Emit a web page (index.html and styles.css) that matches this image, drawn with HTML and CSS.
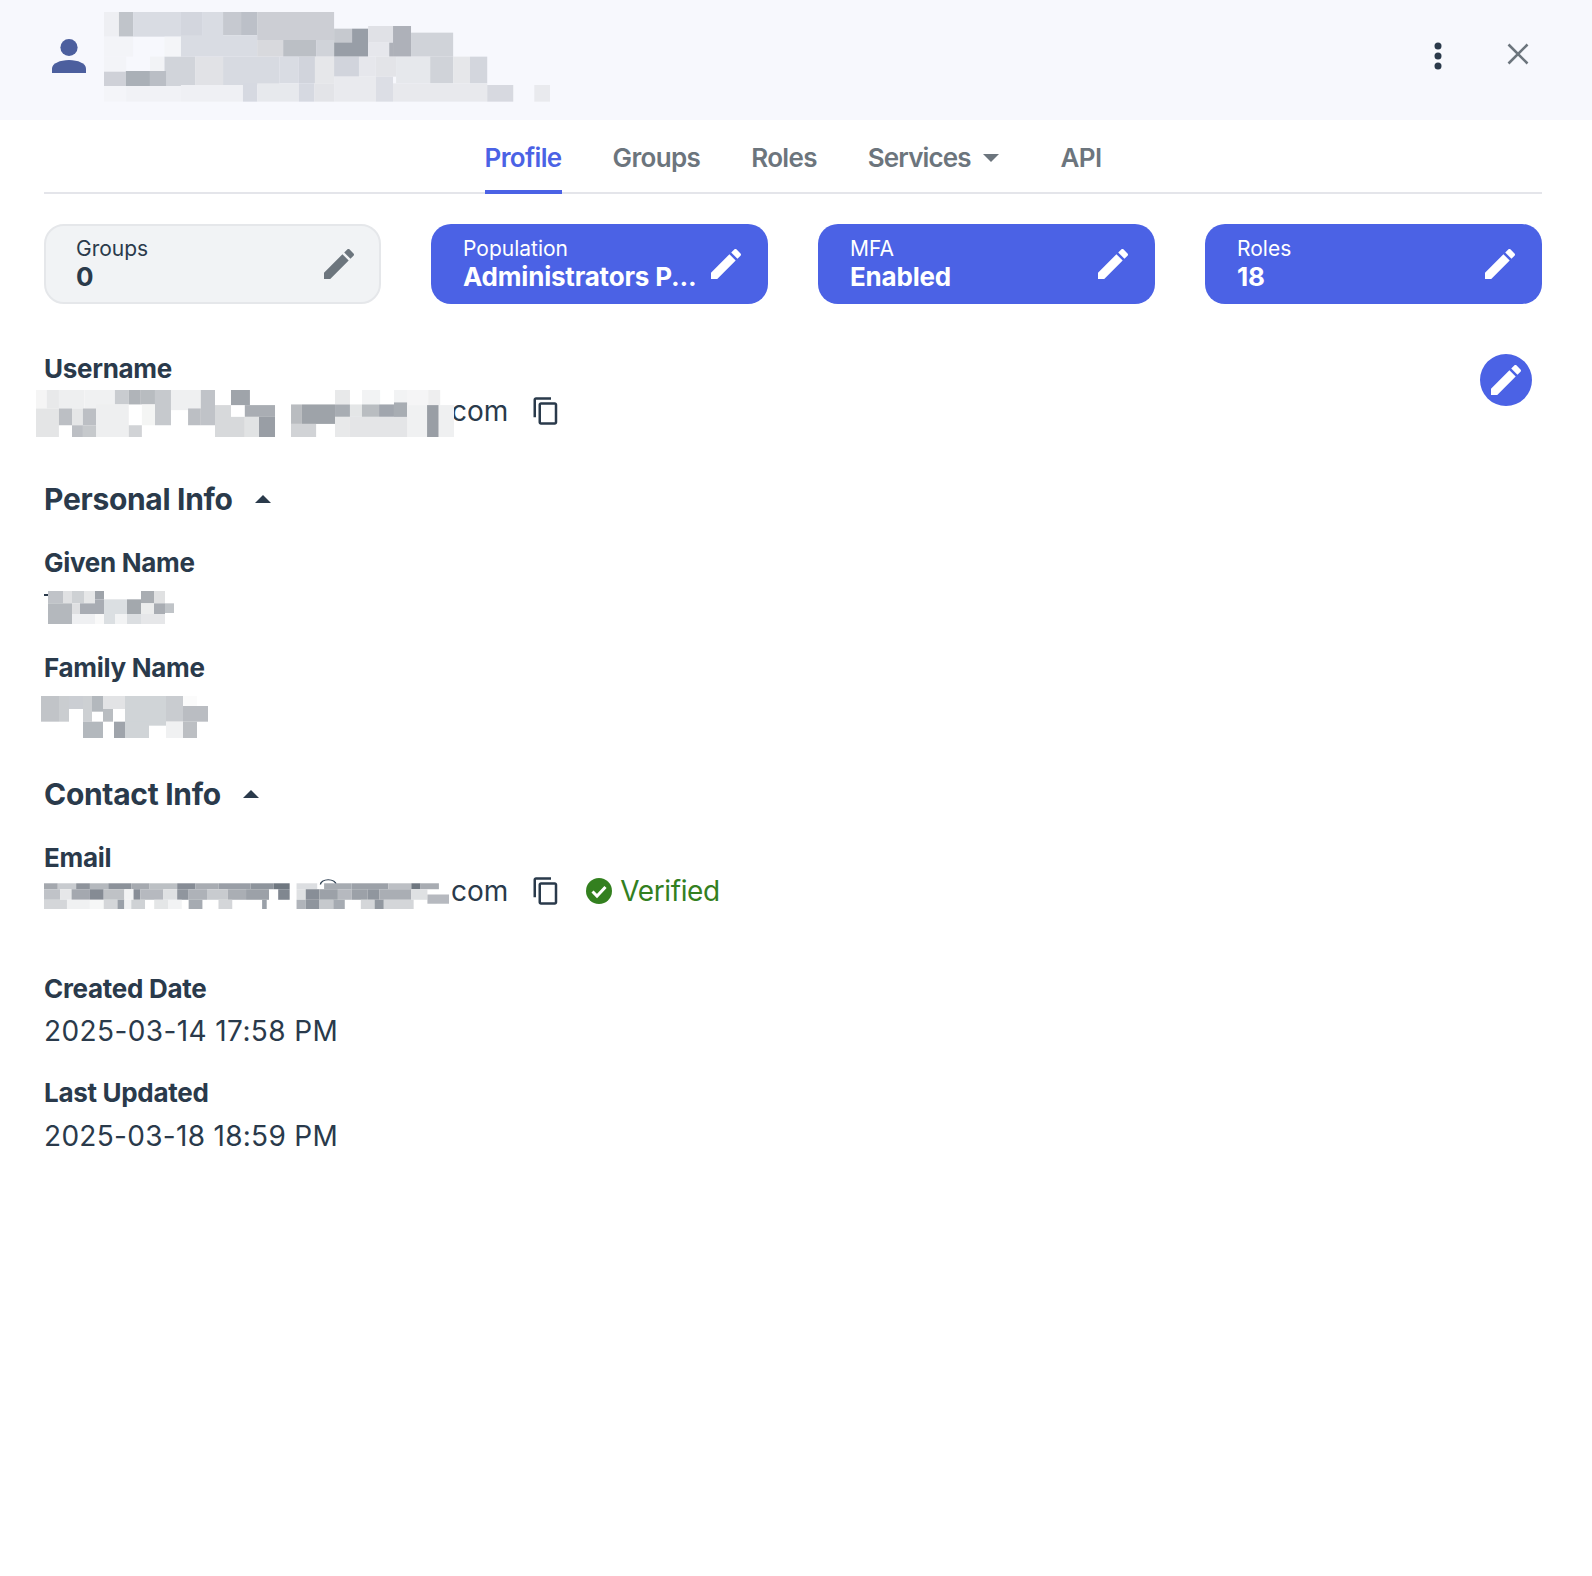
FILE: index.html
```html
<!DOCTYPE html>
<html>
<head>
<title>User Profile</title>
<link rel="stylesheet" href="styles.css">
</head>
<body>

<div class="top_bar">
   <svg class="user_icon" width="34" height="34" viewBox="0 0 34 34">
      <ellipse cx="17" cy="8.5" rx="8.600" ry="8.500" fill="#4c5f9e"/>
      <path d="M0 34V29.500C0 24.500 8 21 17 21s17 3.500 17 8.500V34z" fill="#4c5f9e"/>
   </svg>
   <svg class="blur_name" viewBox="272 36 1165 270" preserveAspectRatio="none">
      <rect x="272" y="36" width="39" height="74" fill="#eeeff3"/>
      <rect x="311" y="36" width="37" height="74" fill="#c0c4ca"/>
      <rect x="348" y="36" width="125" height="74" fill="#d9dce3"/>
      <rect x="473" y="36" width="57" height="74" fill="#d3d6de"/>
      <rect x="530" y="36" width="53" height="74" fill="#d9dce3"/>
      <rect x="583" y="36" width="47" height="70" fill="#c6c9d0"/>
      <rect x="630" y="36" width="42" height="70" fill="#bcc0c8"/>
      <rect x="672" y="36" width="201" height="84" fill="#ccced4"/>
      <rect x="873" y="86" width="47" height="44" fill="#c6c9cf"/>
      <rect x="920" y="86" width="42" height="44" fill="#989ea7"/>
      <rect x="873" y="128" width="89" height="42" fill="#989ea7"/>
      <rect x="962" y="78" width="65" height="50" fill="#e0e1e6"/>
      <rect x="962" y="128" width="55" height="42" fill="#e6e7ec"/>
      <rect x="1027" y="78" width="47" height="92" fill="#aeb1b9"/>
      <rect x="1017" y="128" width="10" height="42" fill="#aeb1b9"/>
      <rect x="1074" y="98" width="110" height="72" fill="#d0d3d9"/>
      <rect x="272" y="110" width="76" height="60" fill="#f3f4f8"/>
      <rect x="430" y="110" width="43" height="60" fill="#f4f5f8"/>
      <rect x="473" y="106" width="199" height="64" fill="#d9dce3"/>
      <rect x="672" y="120" width="68" height="50" fill="#d8d9dd"/>
      <rect x="740" y="120" width="86" height="50" fill="#bbbfc5"/>
      <rect x="826" y="120" width="47" height="50" fill="#d0d3d9"/>
      <rect x="272" y="170" width="58" height="45" fill="#f3f4f8"/>
      <rect x="392" y="170" width="38" height="45" fill="#f2f3f6"/>
      <rect x="430" y="170" width="80" height="88" fill="#d1d4da"/>
      <rect x="510" y="170" width="73" height="85" fill="#e1e2e6"/>
      <rect x="583" y="170" width="147" height="85" fill="#d7dae1"/>
      <rect x="730" y="170" width="50" height="80" fill="#d9dce3"/>
      <rect x="780" y="170" width="43" height="80" fill="#d1d4dc"/>
      <rect x="823" y="170" width="50" height="80" fill="#e6e7ea"/>
      <rect x="873" y="170" width="65" height="60" fill="#d1d4dc"/>
      <rect x="938" y="170" width="44" height="60" fill="#e6e7ec"/>
      <rect x="982" y="170" width="53" height="60" fill="#e3e4e8"/>
      <rect x="1035" y="170" width="89" height="80" fill="#e6e8ec"/>
      <rect x="1124" y="170" width="60" height="80" fill="#d0d3d9"/>
      <rect x="1184" y="170" width="44" height="80" fill="#e6e7ea"/>
      <rect x="1228" y="170" width="45" height="80" fill="#d3d6dd"/>
      <rect x="272" y="215" width="57" height="43" fill="#cfd1d8"/>
      <rect x="329" y="213" width="63" height="45" fill="#aab0b7"/>
      <rect x="392" y="213" width="42" height="45" fill="#babec5"/>
      <rect x="272" y="258" width="58" height="47" fill="#f4f5f9"/>
      <rect x="330" y="258" width="143" height="47" fill="#f1f2f6"/>
      <rect x="473" y="255" width="162" height="50" fill="#eff0f4"/>
      <rect x="635" y="250" width="37" height="55" fill="#d6d9e1"/>
      <rect x="672" y="250" width="109" height="55" fill="#e7e9ed"/>
      <rect x="781" y="250" width="40" height="55" fill="#d6d9e1"/>
      <rect x="821" y="250" width="52" height="55" fill="#e3e4e8"/>
      <rect x="873" y="230" width="109" height="75" fill="#e9eaee"/>
      <rect x="982" y="230" width="45" height="75" fill="#dcdee5"/>
      <rect x="1027" y="250" width="246" height="55" fill="#e8e9ed"/>
      <rect x="1273" y="255" width="68" height="50" fill="#d7d9e0"/>
      <rect x="1396" y="255" width="41" height="50" fill="#e9eaee"/>
   </svg>
   <div class="top_actions">
      <svg class="more_icon" width="8" height="28" viewBox="0 0 8 28">
         <circle cx="4" cy="4" r="3.500" fill="#2b3a4b"/>
         <circle cx="4" cy="14" r="3.500" fill="#2b3a4b"/>
         <circle cx="4" cy="24" r="3.500" fill="#2b3a4b"/>
      </svg>
      <svg class="close_icon" width="22" height="22" viewBox="0 0 22 22">
         <path d="M1.500 1.500l19 19M20.500 1.500l-19 19" stroke="#6c757d" stroke-width="2.600" fill="none"/>
      </svg>
   </div>
</div>

<div class="page">

   <div class="tabs">
      <a class="tab tab_on">Profile</a>
      <a class="tab">Groups</a>
      <a class="tab">Roles</a>
      <a class="tab tab_menu">Services<span class="caret_down"></span></a>
      <a class="tab">API</a>
   </div>

   <div class="cards">
      <div class="card card_off">
         <div class="card_text">
            <div class="card_label">Groups</div>
            <div class="card_value">0</div>
         </div>
         <svg class="card_edit" viewBox="0 0 24 24"><path d="M3 17.250V21h3.750L17.810 9.940l-3.750-3.750L3 17.250zM20.710 7.040c.39-.39.39-1.020 0-1.410l-2.340-2.340c-.39-.39-1.020-.39-1.410 0l-1.830 1.830 3.750 3.750 1.830-1.830z"/></svg>
      </div>
      <div class="card">
         <div class="card_text">
            <div class="card_label">Population</div>
            <div class="card_value">Administrators P...</div>
         </div>
         <svg class="card_edit" viewBox="0 0 24 24"><path d="M3 17.250V21h3.750L17.810 9.940l-3.750-3.750L3 17.250zM20.710 7.040c.39-.39.39-1.020 0-1.410l-2.340-2.340c-.39-.39-1.020-.39-1.410 0l-1.830 1.830 3.750 3.750 1.830-1.830z"/></svg>
      </div>
      <div class="card">
         <div class="card_text">
            <div class="card_label">MFA</div>
            <div class="card_value">Enabled</div>
         </div>
         <svg class="card_edit" viewBox="0 0 24 24"><path d="M3 17.250V21h3.750L17.810 9.940l-3.750-3.750L3 17.250zM20.710 7.040c.39-.39.39-1.020 0-1.410l-2.340-2.340c-.39-.39-1.020-.39-1.410 0l-1.830 1.830 3.750 3.750 1.830-1.830z"/></svg>
      </div>
      <div class="card">
         <div class="card_text">
            <div class="card_label">Roles</div>
            <div class="card_value">18</div>
         </div>
         <svg class="card_edit" viewBox="0 0 24 24"><path d="M3 17.250V21h3.750L17.810 9.940l-3.750-3.750L3 17.250zM20.710 7.040c.39-.39.39-1.020 0-1.410l-2.340-2.340c-.39-.39-1.020-.39-1.410 0l-1.830 1.830 3.750 3.750 1.830-1.830z"/></svg>
      </div>
   </div>

   <div class="user_row">
      <div>
         <div class="field_label">Username</div>
         <div class="copy_row username_row">
            <svg class="blur_username" viewBox="17 135 1149 140" preserveAspectRatio="none">
               <rect x="17" y="135" width="30" height="55" fill="#f5f5f5"/>
               <rect x="47" y="135" width="33" height="55" fill="#e8e9ea"/>
               <rect x="80" y="135" width="70" height="55" fill="#eeeff0"/>
               <rect x="150" y="135" width="84" height="55" fill="#f0f1f2"/>
               <rect x="234" y="135" width="38" height="43" fill="#c9ccd0"/>
               <rect x="272" y="135" width="33" height="43" fill="#b0b4b9"/>
               <rect x="305" y="135" width="39" height="43" fill="#b8bcc0"/>
               <rect x="344" y="135" width="44" height="105" fill="#c6c9cd"/>
               <rect x="388" y="135" width="82" height="60" fill="#eff0f1"/>
               <rect x="470" y="135" width="39" height="105" fill="#c0c3c8"/>
               <rect x="553" y="135" width="52" height="45" fill="#9fa4aa"/>
               <rect x="839" y="135" width="41" height="43" fill="#e8e9ea"/>
               <rect x="913" y="135" width="50" height="43" fill="#f2f3f4"/>
               <rect x="1001" y="135" width="36" height="43" fill="#f2f3f4"/>
               <rect x="1037" y="135" width="58" height="45" fill="#f5f5f6"/>
               <rect x="1095" y="135" width="33" height="45" fill="#eeeeef"/>
               <rect x="17" y="190" width="63" height="85" fill="#e4e5e6"/>
               <rect x="80" y="190" width="36" height="50" fill="#bcbfc4"/>
               <rect x="116" y="190" width="30" height="50" fill="#e5e6e7"/>
               <rect x="146" y="190" width="36" height="50" fill="#bcbfc4"/>
               <rect x="182" y="178" width="90" height="97" fill="#eeeff0"/>
               <rect x="308" y="178" width="36" height="62" fill="#f4f5f4"/>
               <rect x="435" y="190" width="35" height="50" fill="#bcbfc4"/>
               <rect x="509" y="180" width="44" height="95" fill="#d7d9db"/>
               <rect x="591" y="180" width="83" height="35" fill="#a9adb3"/>
               <rect x="718" y="178" width="30" height="58" fill="#b9bcc0"/>
               <rect x="748" y="178" width="91" height="58" fill="#9ea3a9"/>
               <rect x="839" y="178" width="41" height="37" fill="#a8adb3"/>
               <rect x="880" y="178" width="33" height="37" fill="#e4e6e7"/>
               <rect x="913" y="178" width="47" height="37" fill="#b9bdc1"/>
               <rect x="960" y="178" width="41" height="37" fill="#a1a6ae"/>
               <rect x="1001" y="172" width="36" height="46" fill="#a8adb3"/>
               <rect x="1037" y="180" width="55" height="95" fill="#f0f1f2"/>
               <rect x="1092" y="180" width="32" height="95" fill="#999ea5"/>
               <rect x="1124" y="180" width="42" height="95" fill="#eff0f1"/>
               <rect x="116" y="240" width="30" height="35" fill="#bcbfc4"/>
               <rect x="146" y="240" width="36" height="35" fill="#c6c9cc"/>
               <rect x="272" y="240" width="36" height="35" fill="#d1d3d6"/>
               <rect x="553" y="215" width="38" height="60" fill="#d7d9db"/>
               <rect x="591" y="215" width="39" height="60" fill="#e1e3e4"/>
               <rect x="630" y="215" width="44" height="60" fill="#999ea5"/>
               <rect x="718" y="236" width="69" height="39" fill="#d1d3d6"/>
               <rect x="839" y="215" width="41" height="60" fill="#e8e9ea"/>
               <rect x="880" y="215" width="157" height="60" fill="#e4e5e7"/>
            </svg>
            <span class="field_value com_clipped">com</span>
            <svg class="copy_icon" viewBox="0 0 24 24"><path d="M16 1H4c-1.100 0-2 .9-2 2v14h2V3h12V1zm3 4H8c-1.100 0-2 .9-2 2v14c0 1.100.9 2 2 2h11c1.100 0 2-.9 2-2V7c0-1.100-.9-2-2-2zm0 16H8V7h11v14z"/></svg>
         </div>
      </div>
      <div class="round_edit">
         <svg viewBox="0 0 24 24"><path d="M3 17.250V21h3.750L17.810 9.940l-3.750-3.750L3 17.250zM20.710 7.040c.39-.39.39-1.020 0-1.410l-2.340-2.340c-.39-.39-1.020-.39-1.410 0l-1.830 1.830 3.750 3.750 1.830-1.830z"/></svg>
      </div>
   </div>

   <h2 class="section_head personal_head">Personal Info<span class="caret_up"></span></h2>

   <div class="field_label given_label">Given Name</div>
   <div class="given_row">
      <span class="dash"></span>
      <svg class="blur_given" viewBox="54 153 378 99" preserveAspectRatio="none">
         <rect x="54" y="153" width="45" height="37" fill="#c0c3c8"/>
         <rect x="99" y="153" width="27" height="37" fill="#e0e1e3"/>
         <rect x="126" y="153" width="36" height="37" fill="#ced1d4"/>
         <rect x="162" y="153" width="33" height="37" fill="#e6e7e8"/>
         <rect x="195" y="153" width="27" height="25" fill="#9fa4aa"/>
         <rect x="333" y="153" width="39" height="37" fill="#a9adb2"/>
         <rect x="372" y="153" width="33" height="37" fill="#e0e1e2"/>
         <rect x="54" y="190" width="72" height="62" fill="#b4b8bd"/>
         <rect x="126" y="190" width="24" height="32" fill="#dfe0e2"/>
         <rect x="150" y="190" width="45" height="32" fill="#a8acb3"/>
         <rect x="195" y="178" width="27" height="44" fill="#a8acb3"/>
         <rect x="222" y="178" width="69" height="74" fill="#dbdfe2"/>
         <rect x="291" y="178" width="42" height="44" fill="#a3a8ad"/>
         <rect x="333" y="190" width="39" height="32" fill="#eceded"/>
         <rect x="372" y="190" width="33" height="32" fill="#a9adb3"/>
         <rect x="405" y="190" width="27" height="29" fill="#c0c4c8"/>
         <rect x="126" y="222" width="69" height="30" fill="#eff0f2"/>
         <rect x="195" y="222" width="27" height="30" fill="#f9f9f9"/>
         <rect x="255" y="222" width="36" height="30" fill="#f2f3f4"/>
         <rect x="291" y="222" width="42" height="30" fill="#dbdee1"/>
         <rect x="333" y="222" width="72" height="30" fill="#e6e7e9"/>
      </svg>
   </div>

   <div class="field_label family_label">Family Name</div>
   <svg class="blur_family" viewBox="33 468 501 126" preserveAspectRatio="none">
      <rect x="33" y="468" width="54" height="77" fill="#c1c4c8"/>
      <rect x="87" y="468" width="30" height="77" fill="#cacdd0"/>
      <rect x="117" y="468" width="42" height="39" fill="#cbced3"/>
      <rect x="159" y="468" width="27" height="77" fill="#cdd0d3"/>
      <rect x="186" y="468" width="33" height="47" fill="#b3b8bd"/>
      <rect x="219" y="468" width="66" height="39" fill="#e2e3e5"/>
      <rect x="285" y="468" width="123" height="89" fill="#d0d4d7"/>
      <rect x="408" y="468" width="51" height="77" fill="#c9ccd0"/>
      <rect x="459" y="468" width="42" height="30" fill="#fbfbfb"/>
      <rect x="459" y="498" width="75" height="47" fill="#babdc2"/>
      <rect x="219" y="507" width="30" height="38" fill="#b9bdc1"/>
      <rect x="159" y="545" width="60" height="49" fill="#b3b8bd"/>
      <rect x="252" y="545" width="33" height="49" fill="#9fa4ab"/>
      <rect x="285" y="545" width="72" height="49" fill="#d0d4d7"/>
      <rect x="408" y="545" width="51" height="49" fill="#f0f1f2"/>
      <rect x="459" y="545" width="42" height="49" fill="#bcbfc3"/>
   </svg>

   <h2 class="section_head contact_head">Contact Info<span class="caret_up"></span></h2>

   <div class="field_label email_label">Email</div>
   <div class="copy_row email_row">
      <svg class="blur_email" viewBox="30 325 882 91" preserveAspectRatio="none">
         <path d="M632 342a17 15 0 0 1 34 0" stroke="#2c3e50" stroke-width="3" fill="none"/>
         <rect x="30" y="338" width="30" height="18" fill="#a4a8ae"/>
         <rect x="60" y="338" width="40" height="18" fill="#c8cbcf"/>
         <rect x="100" y="338" width="30" height="18" fill="#8e939b"/>
         <rect x="130" y="338" width="40" height="18" fill="#b4b8bd"/>
         <rect x="170" y="338" width="50" height="18" fill="#8c929a"/>
         <rect x="220" y="338" width="40" height="18" fill="#a6aab0"/>
         <rect x="260" y="338" width="60" height="18" fill="#bcc0c4"/>
         <rect x="320" y="338" width="40" height="18" fill="#868c95"/>
         <rect x="360" y="338" width="50" height="18" fill="#a8acb2"/>
         <rect x="410" y="338" width="70" height="18" fill="#999ea6"/>
         <rect x="480" y="338" width="50" height="18" fill="#8e949c"/>
         <rect x="530" y="338" width="35" height="18" fill="#6f7780"/>
         <rect x="580" y="338" width="45" height="18" fill="#dcdee1"/>
         <rect x="640" y="338" width="60" height="18" fill="#a6abb1"/>
         <rect x="700" y="338" width="80" height="18" fill="#9ca1a8"/>
         <rect x="780" y="338" width="50" height="18" fill="#bcbfc4"/>
         <rect x="830" y="338" width="20" height="18" fill="#6f7780"/>
         <rect x="850" y="338" width="40" height="18" fill="#a8acb2"/>
         <rect x="30" y="356" width="35" height="32" fill="#c0c3c8"/>
         <rect x="65" y="356" width="25" height="32" fill="#e6e7e9"/>
         <rect x="90" y="356" width="40" height="32" fill="#a4a8af"/>
         <rect x="130" y="356" width="30" height="32" fill="#858b94"/>
         <rect x="160" y="356" width="45" height="32" fill="#bfc2c6"/>
         <rect x="205" y="356" width="20" height="32" fill="#f2f3f4"/>
         <rect x="225" y="356" width="15" height="32" fill="#888e97"/>
         <rect x="240" y="356" width="50" height="32" fill="#b6b9bf"/>
         <rect x="290" y="356" width="30" height="32" fill="#dfe1e3"/>
         <rect x="320" y="356" width="25" height="32" fill="#90969e"/>
         <rect x="345" y="356" width="40" height="32" fill="#aeb2b8"/>
         <rect x="385" y="356" width="45" height="32" fill="#c8cbcf"/>
         <rect x="430" y="356" width="40" height="32" fill="#aaaeb4"/>
         <rect x="470" y="356" width="50" height="32" fill="#9ca1a8"/>
         <rect x="540" y="356" width="25" height="32" fill="#808790"/>
         <rect x="580" y="356" width="20" height="32" fill="#dfe1e3"/>
         <rect x="600" y="356" width="30" height="32" fill="#888e97"/>
         <rect x="630" y="356" width="40" height="32" fill="#9ca1a8"/>
         <rect x="670" y="356" width="30" height="32" fill="#b6b9bf"/>
         <rect x="700" y="356" width="35" height="32" fill="#9ca1a8"/>
         <rect x="735" y="356" width="25" height="32" fill="#90969e"/>
         <rect x="760" y="356" width="70" height="32" fill="#aaaeb4"/>
         <rect x="830" y="356" width="35" height="32" fill="#dfe1e3"/>
         <rect x="865" y="372" width="47" height="28" fill="#b6b9bf"/>
         <rect x="30" y="388" width="50" height="28" fill="#d4d6d9"/>
         <rect x="80" y="388" width="50" height="28" fill="#f0f1f2"/>
         <rect x="130" y="388" width="30" height="28" fill="#f6f7f7"/>
         <rect x="160" y="388" width="30" height="28" fill="#d4d6d9"/>
         <rect x="190" y="388" width="15" height="28" fill="#9aa0a8"/>
         <rect x="205" y="388" width="15" height="28" fill="#f0f1f2"/>
         <rect x="220" y="388" width="30" height="28" fill="#cfd2d5"/>
         <rect x="270" y="388" width="30" height="28" fill="#e4e6e7"/>
         <rect x="300" y="388" width="30" height="28" fill="#f2f3f4"/>
         <rect x="345" y="388" width="30" height="28" fill="#a6abb2"/>
         <rect x="410" y="388" width="30" height="28" fill="#d4d6d9"/>
         <rect x="505" y="388" width="10" height="28" fill="#9aa0a8"/>
         <rect x="580" y="388" width="20" height="28" fill="#b0b4ba"/>
         <rect x="600" y="388" width="30" height="28" fill="#8f959d"/>
         <rect x="630" y="388" width="30" height="28" fill="#c6c9cd"/>
         <rect x="660" y="388" width="25" height="28" fill="#a6abb2"/>
         <rect x="720" y="388" width="30" height="28" fill="#d4d6d9"/>
         <rect x="750" y="388" width="20" height="28" fill="#9298a0"/>
         <rect x="770" y="388" width="65" height="28" fill="#d4d6d9"/>
      </svg>
      <span class="field_value email_com">com</span>
      <svg class="copy_icon" viewBox="0 0 24 24"><path d="M16 1H4c-1.100 0-2 .9-2 2v14h2V3h12V1zm3 4H8c-1.100 0-2 .9-2 2v14c0 1.100.9 2 2 2h11c1.100 0 2-.9 2-2V7c0-1.100-.9-2-2-2zm0 16H8V7h11v14z"/></svg>
      <svg class="check_icon" viewBox="0 0 26 26">
         <circle cx="13" cy="13" r="13" fill="#33801f"/>
         <path d="M6.500 13.500l4.500 4.500L19.500 9" stroke="#fff" stroke-width="3" fill="none"/>
      </svg>
      <span class="verified">Verified</span>
   </div>

   <div class="field_label created_label">Created Date</div>
   <div class="field_value date_value">2025-03-14 17:58 PM</div>

   <div class="field_label updated_label">Last Updated</div>
   <div class="field_value date_value updated_value">2025-03-18 18:59 PM</div>

</div>

</body>
</html>
```

FILE: styles.css
```css
html {height: 100%}
body {margin: 0; background-color: white; color: #2a3a4b;
      font-family: Inter, "Liberation Sans", sans-serif}

/* header strip */
.top_bar {display: flex; align-items: flex-start; height: 120px; background-color: #f7f8fd}
.user_icon {margin: 39px 0 0 52px; flex: none}
.blur_name {width: 446px; height: 90px; margin: 12px 0 0 18px; flex: none}
.top_actions {margin-left: auto; display: flex; align-items: flex-start; gap: 65px;
              padding: 42px 63px 0 0}
.more_icon {display: block}
.close_icon {display: block; margin-top: 1px}

/* main column */
.page {padding: 0 50px 0 44px}

.tabs {display: flex; justify-content: center; gap: 51px; height: 72px;
       border-bottom: 2px solid #e4e5ea}
.tab  {font-size: 26px; font-weight: 600; letter-spacing: -0.65px; color: #6c757d;
       padding-top: 22px; height: 48px; display: block}
.tab_on {color: #4b62e5; border-bottom: 4px solid #4b62e5}
.tab_menu {display: flex; align-items: flex-start; margin-right: 11px; letter-spacing: -0.9px}
.caret_down {width: 0; height: 0; border-left: 8.500px solid transparent;
             border-right: 8.500px solid transparent; border-top: 8px solid #6c757d;
             margin: 12px 0 0 12px}

.cards {display: grid; grid-template-columns: repeat(4, 1fr); gap: 50px; margin-top: 30px}
.card  {display: flex; align-items: center; justify-content: space-between; height: 80px;
        box-sizing: border-box; padding: 0 24px 0 32px; border-radius: 20px;
        background-color: #4b62e5; color: white; min-width: 0}
.card_off {background-color: #f1f3f5; border: 2px solid #e5e7ea; color: #2a3a4b;
           padding-left: 30px; padding-right: 22px}
.card_off .card_edit {fill: #6c757d}
.card_label {font-size: 21px; line-height: 26px}
.card_value {font-size: 26px; line-height: 30px; font-weight: 700; letter-spacing: -0.2px;
             white-space: nowrap}
.card_edit {width: 40px; height: 40px; fill: white; flex: none; margin-right: -2px}

/* fields */
.user_row {display: flex; justify-content: space-between; align-items: flex-start; margin-top: 49px}
.field_label {font-size: 26px; line-height: 32px; font-weight: 700; letter-spacing: -0.3px}
.field_value {font-size: 28px; line-height: 36px}
.copy_row {display: flex; align-items: center}
.username_row {height: 47px; margin-left: -8px; margin-top: 5px}
.blur_username {width: 418px; height: 47px; flex: none; position: relative; z-index: 1}
.com_clipped {margin: -6px 0 0 -3px}
.email_row {height: 30px; margin-top: 2px}
.blur_email {width: 405px; height: 30px; flex: none; margin-top: 6px}
.email_com {margin-left: 2px}
.copy_icon {width: 30px; height: 30px; fill: #2a3a4b; flex: none; margin-left: 23px}
.com_clipped + .copy_icon {margin-top: -6px}
.check_icon {width: 26px; height: 26px; flex: none; margin-left: 25px}
.verified {font-size: 28px; color: #33801f; margin-left: 8px; letter-spacing: -0.4px}

.round_edit {width: 52px; height: 52px; border-radius: 50%; background-color: #4b62e5;
             display: flex; align-items: center; justify-content: center;
             margin: 1px 10px 0 0}
.round_edit svg {width: 40px; height: 40px; fill: white}

.section_head {display: flex; align-items: center; margin: 0; font-size: 30px; line-height: 38px;
               font-weight: 700; letter-spacing: -0.3px}
.caret_up {width: 0; height: 0; border-left: 8.500px solid transparent;
           border-right: 8.500px solid transparent; border-bottom: 8px solid #2a3a4b;
           margin-left: 22px}
.personal_head {margin-top: 43px}
.given_label {margin-top: 29px}
.given_row {display: flex; align-items: flex-start; height: 33px; margin-top: 12px}
.dash {width: 4px; height: 2px; background-color: #2a3a4b; margin-top: 3px}
.blur_given {width: 126px; height: 33px}
.family_label {margin-top: 28px}
.blur_family {display: block; width: 167px; height: 42px; margin: 12px 0 0 -3px}
.contact_head {margin-top: 37px}
.email_label {margin-top: 29px}
.created_label {margin-top: 67px}
.updated_label {margin-top: 28px}
.date_value {margin-top: 8px; letter-spacing: 0.4px}
.updated_value {margin-top: 9px; letter-spacing: 0.3px}
```
